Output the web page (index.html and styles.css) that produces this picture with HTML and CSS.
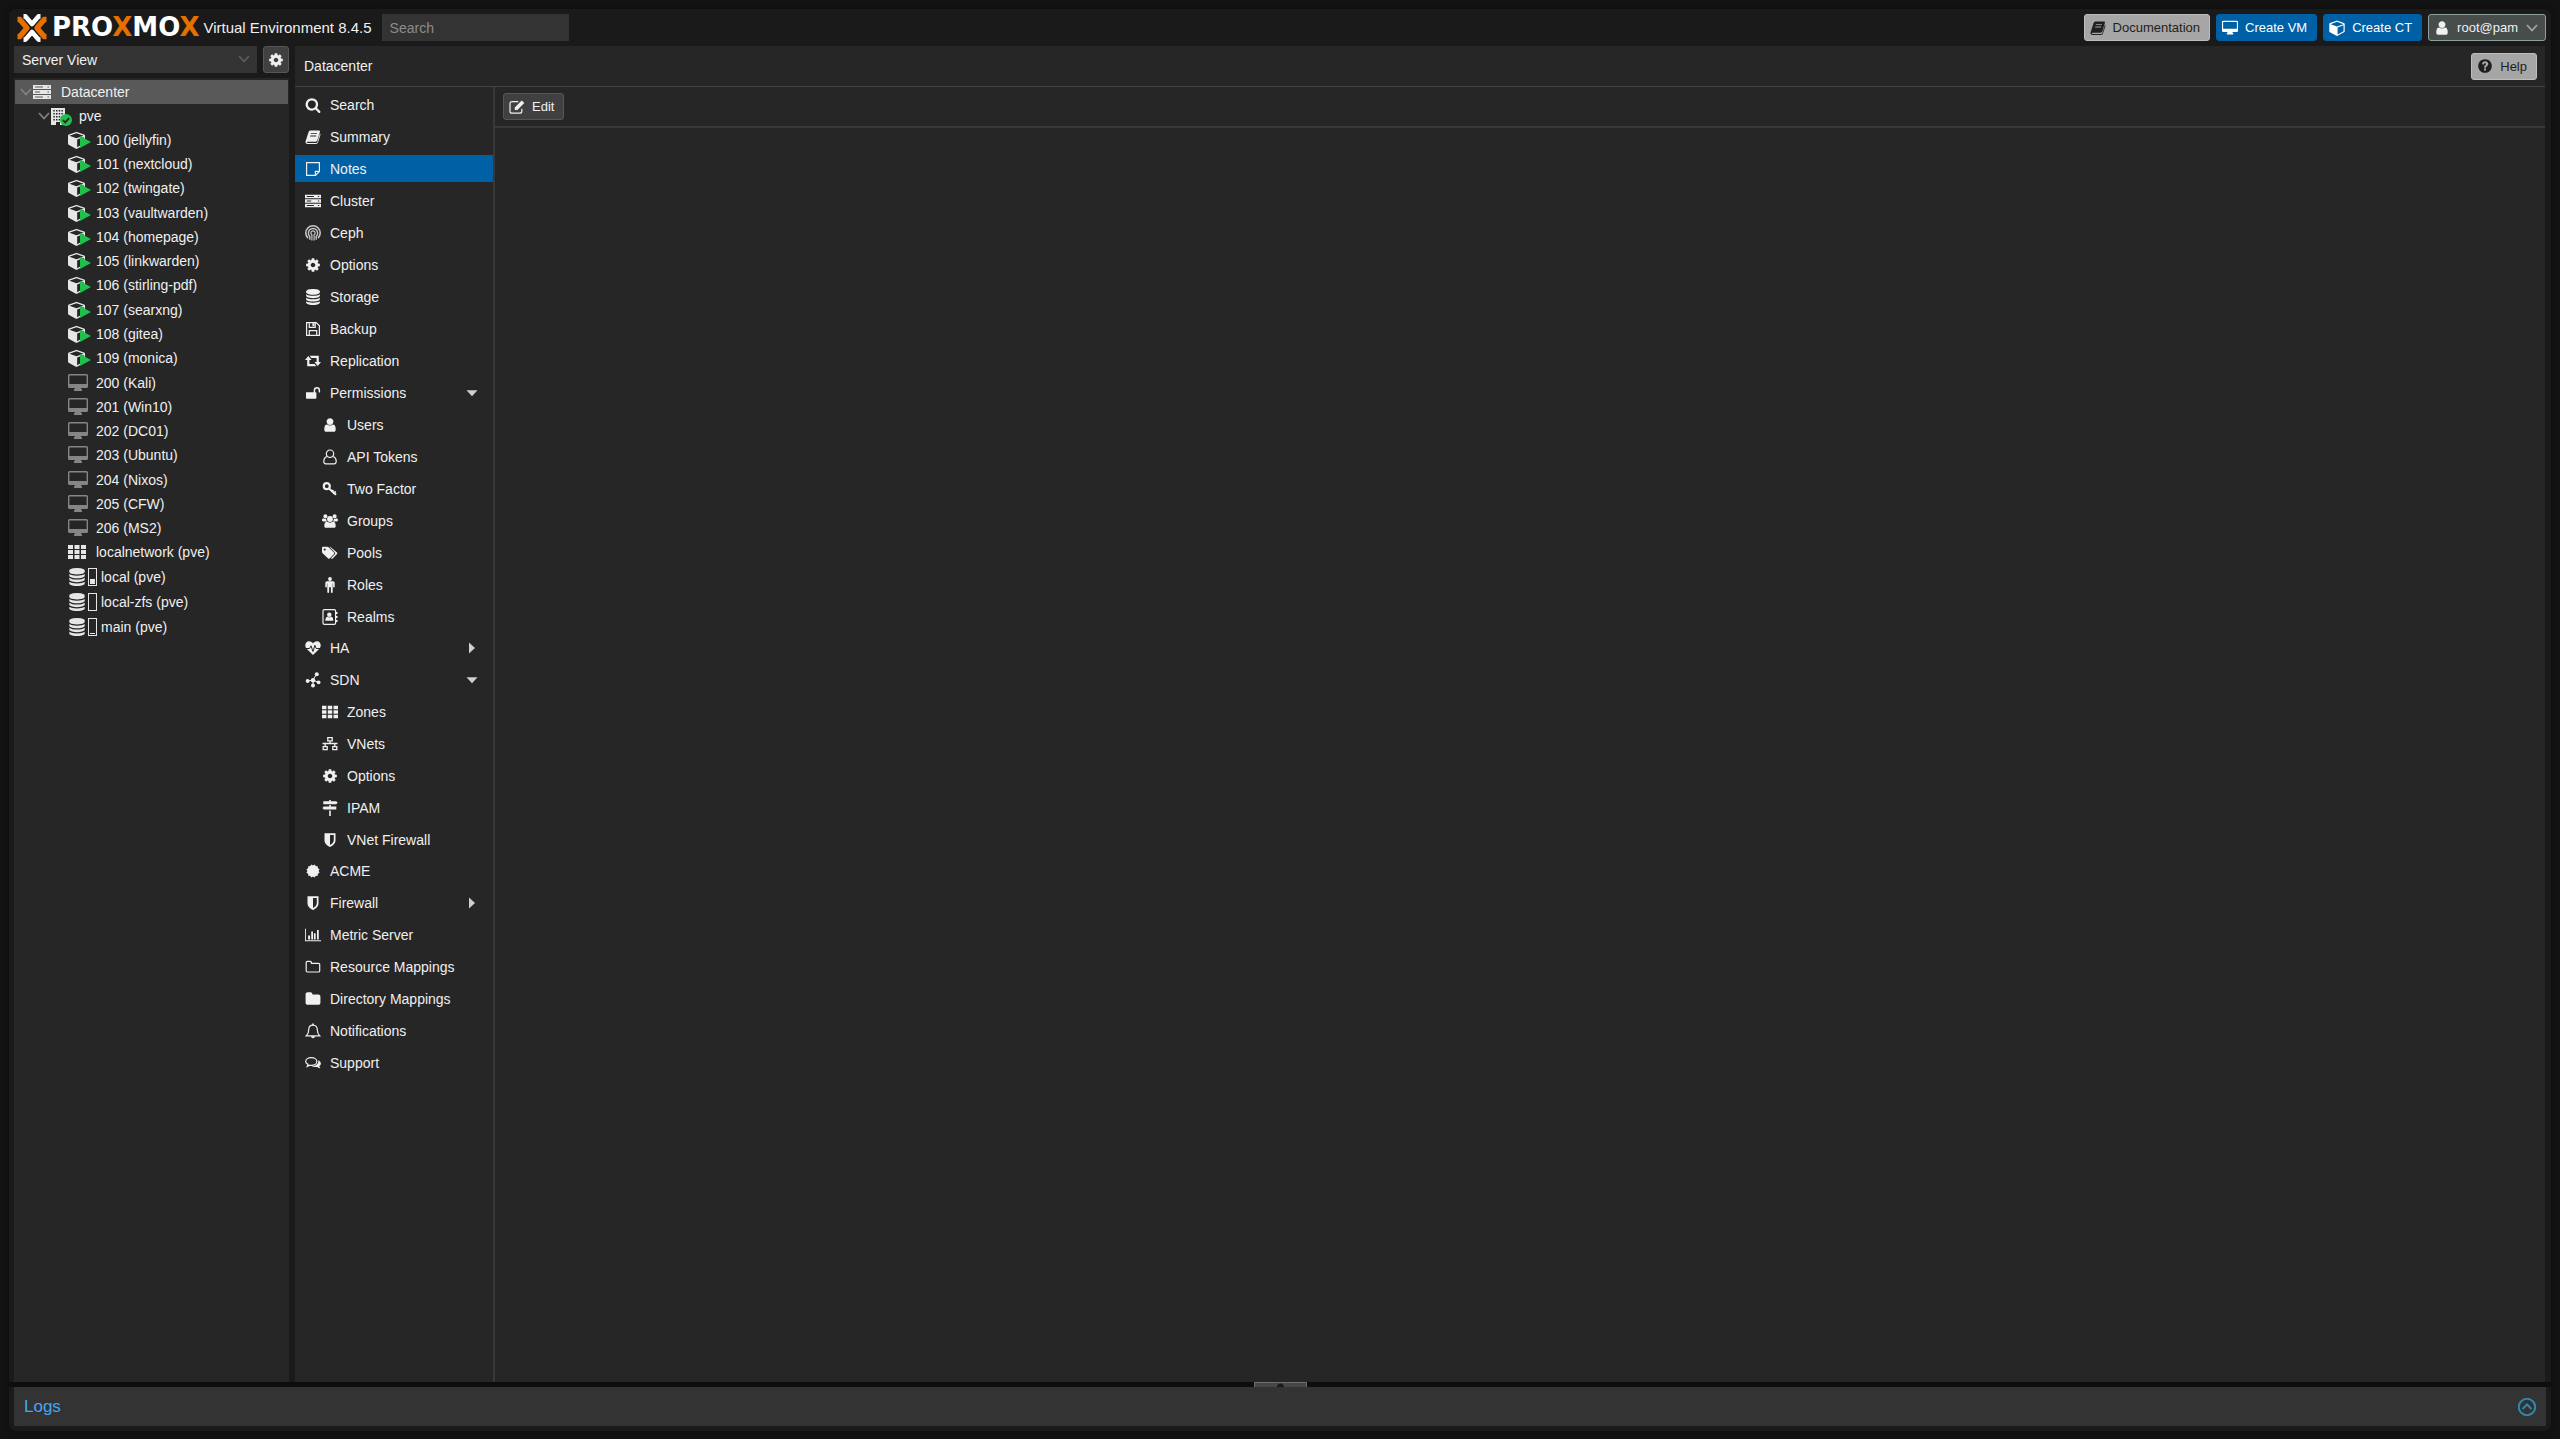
FILE: index.html
```html
<!DOCTYPE html>
<html lang="en">
<head>
  <meta charset="UTF-8">
  <title>pve - Proxmox Virtual Environment</title>
  <link rel="stylesheet" href="styles.css">
</head>
<body>
  <!-- icon sprite -->
  <svg class="sprite" aria-hidden="true">
    <symbol id="i-search" viewBox="0 0 1792 1792"><path d="M1216 832q0-185-131.5-316.5t-316.5-131.5-316.5 131.5-131.5 316.5 131.5 316.5 316.5 131.5 316.5-131.5 131.5-316.5zm512 832q0 52-38 90t-90 38q-54 0-90-38l-343-342q-179 124-399 124-143 0-273.5-55.5t-225-150-150-225-55.5-273.5 55.5-273.5 150-225 225-150 273.5-55.5 273.5 55.5 225 150 150 225 55.5 273.5q0 220-124 399l343 343q37 37 37 90z"/></symbol>
    <symbol id="i-user" viewBox="0 0 1792 1792"><path d="M1536 1399q0 109-62.500 187t-150.500 78h-854q-88 0-150.500-78t-62.500-187q0-85 8.500-160.500t31.500-152 58.500-131 94-89 134.500-34.500q131 128 313 128t313-128q76 0 134.500 34.500t94 89 58.500 131 31.500 152 8.500 160.500zm-256-887q0 159-112.500 271.500t-271.500 112.500-271.500-112.500-112.500-271.500 112.500-271.500 271.500-112.500 271.500 112.500 112.500 271.500z"/></symbol>
    <symbol id="i-cog" viewBox="0 0 1792 1792"><path d="M1152 896q0-106-75-181t-181-75-181 75-75 181 75 181 181 75 181-75 75-181zm512-109v222q0 12-8 23t-20 13l-185 28q-19 54-39 91 35 50 107 138 10 12 10 25t-9 23q-27 37-99 108t-94 71q-12 0-26-9l-138-108q-44 23-91 38-16 136-29 186-7 28-36 28h-222q-14 0-24.500-8.500t-11.500-21.500l-28-184q-49-16-90-37l-141 107q-10 9-25 9-14 0-25-11-126-114-165-168-7-10-7-23 0-12 8-23 15-21 51-66.500t54-70.500q-27-50-41-99l-183-27q-13-2-21-12.500t-8-23.500v-222q0-12 8-23t19-13l186-28q14-46 39-92-40-57-107-138-10-12-10-24 0-10 9-23 26-36 98.500-107.500t94.500-71.500q13 0 26 10l138 107q44-23 91-38 16-136 29-186 7-28 36-28h222q14 0 24.500 8.500t11.500 21.500l28 184q49 16 90 37l142-107q9-9 24-9 13 0 25 10 129 119 165 170 7 8 7 22 0 12-8 23-15 21-51 66.500t-54 70.500q26 50 41 98l183 28q13 2 21 12.500t8 23.500z"/></symbol>
    <symbol id="i-database" viewBox="0 0 1792 1792"><path d="M896 768q237 0 443-43t325-127v170q0 69-103 128t-280 93.500-385 34.500-385-34.500-280-93.500-103-128v-170q119 84 325 127t443 43zm0 768q237 0 443-43t325-127v170q0 69-103 128t-280 93.500-385 34.500-385-34.500-280-93.500-103-128v-170q119 84 325 127t443 43zm0-384q237 0 443-43t325-127v170q0 69-103 128t-280 93.500-385 34.500-385-34.500-280-93.500-103-128v-170q119 84 325 127t443 43zm0-1152q208 0 385 34.500t280 93.500 103 128v128q0 69-103 128t-280 93.500-385 34.500-385-34.500-280-93.500-103-128v-128q0-69 103-128t280-93.500 385-34.500z"/></symbol>
    <symbol id="i-folder" viewBox="0 0 1792 1792"><path d="M1728 608v704q0 92-66 158t-158 66h-1216q-92 0-158-66t-66-158v-960q0-92 66-158t158-66h320q92 0 158 66t66 158v32h672q92 0 158 66t66 158z"/></symbol>
    <symbol id="i-folder-o" viewBox="0 0 16 16"><path d="M1.200 11.800V3.600A1.200 1.200 0 0 1 2.400 2.400h2.800a1.200 1.200 0 0 1 1.200 1.200v.8h7.100a1.200 1.200 0 0 1 1.200 1.200v6.200a1.200 1.200 0 0 1-1.200 1.200H2.400a1.200 1.200 0 0 1-1.200-1.200z" fill="none" stroke="currentColor" stroke-width="1.200"/></symbol>
    <symbol id="i-cube" viewBox="0 64 1664 1728"><path d="M896 1629l640-349v-636l-640 233v752zm-64-865l698-254-698-254-698 254zm832-252v768q0 35-18 65t-49 47l-704 384q-28 16-61 16t-61-16l-704-384q-31-17-49-47t-18-65v-768q0-40 23-73t61-47l704-256q22-8 44-8t44 8l704 256q38 14 61 47t23 73z"/></symbol>
    <symbol id="i-book" viewBox="0 0 16 16"><path fill-rule="evenodd" d="M5.600 1.500h8.200c.9 0 1.400.7 1.100 1.500l-2.600 8.600c-.2.700-.9 1.200-1.700 1.200H2.500c-.6 0-.8.5-.4.900.2.200.5.200.8.200h8.300c.6 0 1-.3 1.200-.9l2.500-8.300c.6.300.7.800.5 1.400L13 13.600c-.3.800-1 1.400-1.900 1.400H2.600C1 15 .1 13.600.6 12.300L3.600 3c.3-.9 1-1.500 2-1.500zM6 4.200l-.3.900h6.100l.3-.9zm-.7 2.300-.3.900h6.100l.3-.9z"/></symbol>
    <symbol id="i-note" viewBox="0 0 16 16"><path d="M1.600 1.600h12.800v8.900l-3.900 3.900H1.600zM14.400 10.300h-4v4" fill="none" stroke="currentColor" stroke-width="1.200"/></symbol>
    <symbol id="i-server" viewBox="0 0 18 16"><path fill-rule="evenodd" d="M0 1h18v4H0zM0 6h18v4H0zM0 11h18v4H0zM2 2.400v1.200h8V2.400zM2 7.400v1.200h5V7.400zM2 12.400v1.200h8v-1.200zM14.500 2.400v1.200h1.500V2.400zM14.500 7.400v1.200h1.500V7.400zM14.500 12.400v1.200h1.500v-1.200z"/></symbol>
    <symbol id="i-ceph" viewBox="0 0 16 16"><g fill="none" stroke="currentColor" opacity=".8"><path d="M3 13.200a7.200 7.200 0 1 1 10 0" stroke-width="1.600"/><path d="M4.800 14.800v-3.400a4.600 4.600 0 1 1 6.400 0v3.400" stroke-width="1.400"/><path d="M6.900 15.600V9.800a2.100 2.100 0 1 1 2.200 0v5.800" stroke-width="1.200"/></g></symbol>
    <symbol id="i-save" viewBox="0 0 16 16"><path d="M1.600 1.600h9.600l3.200 3.200v9.600H1.600zM4.300 14.400V9.600h7.400v4.800M4.300 1.600v4.700h5.900V1.600" fill="none" stroke="currentColor" stroke-width="1.200"/><path d="M7.400 2.200h2v3h-2z"/></symbol>
    <symbol id="i-retweet" viewBox="0 0 16 16"><path d="M0 7l3.300-4 3.300 4H4.400v4h5.200l1.800 2.200H2.200V7zM16 9l-3.300 4-3.300-4h2.200V5H6.400L4.600 2.800h9.200V9z"/></symbol>
    <symbol id="i-unlock" viewBox="0 0 16 16"><path d="M1 7.300h7.700V5.200a3.200 3.200 0 0 1 6.400 0V7a.8.8 0 0 1-1.500 0V5.200a1.700 1.700 0 0 0-3.400 0v2.100h.4a.8.800 0 0 1 .8.800v4.900a.8.800 0 0 1-.8.800H1.800a.8.800 0 0 1-.8-.8z"/></symbol>
    <symbol id="i-user-o" viewBox="0 0 16 16"><g fill="none" stroke="currentColor" stroke-width="1.200"><circle cx="8" cy="4.700" r="3.700"/><path d="M4.800 7.600C2.700 8.200 1.800 10 1.800 12.600c0 1.300.9 2.200 2 2.200h8.400c1.100 0 2-.9 2-2.200 0-2.600-.9-4.400-3-5"/></g></symbol>
    <symbol id="i-key" viewBox="0 0 16 16"><g fill="none" stroke="currentColor"><circle cx="4.800" cy="5.200" r="3" stroke-width="2.200"/><path d="M7 7.400l7 6.400" stroke-width="2"/><path d="M11.400 12.800l2.300-2.400M9.600 11l1.800-1.900" stroke-width="1.600"/></g></symbol>
    <symbol id="i-users" viewBox="0 0 18 16"><circle cx="3.800" cy="2.700" r="2.200"/><circle cx="14.200" cy="2.700" r="2.200"/><path d="M0 7.200c0-1.400.7-2.400 1.700-2.400 1.300.9 2 .9 3.100.5C4.600 7 5 7.700 5.600 8.500H1.500C.6 8.500 0 8 0 7.200zM18 7.200c0-1.400-.7-2.400-1.700-2.400-1.300.9-2 .9-3.100.5.200 1.700-.2 2.400-.8 3.200h4.100c.9 0 1.500-.5 1.500-1.300z"/><circle cx="9" cy="5.700" r="3.300"/><path d="M5.500 8.600c2.200 1.700 4.800 1.700 7 0 2.200.4 2.900 2.500 2.900 4.900 0 1.400-.8 2.200-2 2.200H4.600c-1.200 0-2-.8-2-2.200 0-2.400.7-4.500 2.900-4.900z"/></symbol>
    <symbol id="i-tags" viewBox="0 0 18 16"><path fill-rule="evenodd" d="M0 2.500C0 1.700.6 1.100 1.400 1.100h4.500c.7 0 1.600.4 2.100.9l5.500 5.500c.5.500.5 1.200 0 1.700l-4.900 4.900c-.5.500-1.200.5-1.700 0L1 8.600C.4 8 0 7.200 0 6.500zM3 2.800a1.200 1.200 0 1 0 .01 0z"/><path d="M8.300 1.100c.8 0 1.700.4 2.200.9L16.900 7.500c.5.500.5 1.200 0 1.700L12 14.100c-.6.600-1.300.5-1.900-.2l4.300-4.400c.6-.7.6-1.500 0-2.200z"/></symbol>
    <symbol id="i-male" viewBox="0 0 16 16"><circle cx="8" cy="2" r="1.900"/><path d="M5 4.300h6a1.700 1.700 0 0 1 1.700 1.700v3.800a.8.800 0 0 1-1.600 0V6.600h-.4v8.400a.9.900 0 0 1-1.800 0v-4.700h-1.800V15a.9.900 0 0 1-1.800 0V6.600h-.4v3.200a.8.800 0 0 1-1.600 0V6A1.700 1.700 0 0 1 5 4.300z"/></symbol>
    <symbol id="i-address" viewBox="0 0 16 16"><rect x="1" y=".6" width="12.600" height="14.800" rx="1.400" fill="none" stroke="currentColor" stroke-width="1.200"/><path d="M14 3h1.500v2H14zM14 7h1.500v2H14zM14 11h1.500v2H14z"/><circle cx="7.300" cy="5.700" r="2.200"/><path d="M3.300 11.700c0-2.300.7-4 2.300-4 1.200.9 2.300.9 3.500 0 1.600 0 2.200 1.700 2.200 4z"/></symbol>
    <symbol id="i-heartbeat" viewBox="0 0 16 16"><path d="M8 15L1.600 8.800C-1 5.800.5 1.300 4 1.300c1.900 0 3.100 1.100 4 2.100.9-1 2.100-2.100 4-2.100 3.500 0 5 4.500 2.400 7.500z"/><path class="cut" d="M0 8.500h4.600L6 5.800l2 5.700 1.900-6.200 1.300 3.200H16"/></symbol>
    <symbol id="i-sdn" viewBox="0 0 16 16"><path d="M3 9l5-1 3.500-6M8 8.300V13M8 8.300l5.500 2" fill="none" stroke="currentColor" stroke-width="1"/><circle cx="2.600" cy="9" r="1.900"/><circle cx="8" cy="8.300" r="2.200"/><circle cx="11.800" cy="2.200" r="2"/><circle cx="8" cy="13.400" r="2"/><circle cx="13.600" cy="10.300" r="1.900"/></symbol>
    <symbol id="i-th" viewBox="0 0 18 16"><path d="M0 1h5v4H0zM6.500 1h5v4h-5zM13 1h5v4h-5zM0 6h5v4H0zM6.500 6h5v4h-5zM13 6h5v4h-5zM0 11h5v4H0zM6.500 11h5v4h-5zM13 11h5v4h-5z"/></symbol>
    <symbol id="i-sitemap" viewBox="0 0 16 16"><path d="M5.800 1.600h4.400v3.300H5.800zM1.200 10.600h4v3h-4zM10.800 10.600h4v3h-4zM8 5v2.500M.5 7.500h15M3.200 7.500v3M12.800 7.500v3" fill="none" stroke="currentColor" stroke-width="1.300"/></symbol>
    <symbol id="i-signs" viewBox="0 0 16 16"><path d="M7.200 0h1.600v1.200h5.400l1.500 1.500-1.500 1.600H1.300V1.200h5.900zM7.200 5h1.600v1.500h5.500v3H1.800L.4 8l1.400-1.500h5.400zM7.200 10.500h1.600V16H7.200z"/></symbol>
    <symbol id="i-shield" viewBox="0 0 16 16"><path fill-rule="evenodd" d="M2.500 1.200h11v7c0 3.300-2.600 5.400-5.500 6.800-2.900-1.400-5.500-3.500-5.500-6.800zM8 2.900v10.200c2.200-1.300 3.800-2.700 3.800-5V2.900z"/></symbol>
    <symbol id="i-certificate" viewBox="0 0 16 16"><path d="M3.200 3.200h9.600v9.600H3.200z"/><path d="M3.200 3.200h9.600v9.600H3.200z" transform="rotate(30 8 8)"/><path d="M3.200 3.200h9.600v9.600H3.200z" transform="rotate(60 8 8)"/></symbol>
    <symbol id="i-chart" viewBox="0 0 18 16"><path d="M0 1h1v13h17v1H0zM3.500 8.500h2.200V13H3.500zM7 4h2v9H7zM10 6h2v7h-2zM13.500 2.500h2V13h-2z"/></symbol>
    <symbol id="i-bell" viewBox="0 0 16 16"><path d="M1.400 12.800C3 11.400 3.700 9.800 3.700 6.800c0-2.600 1.600-4.700 4.300-4.700s4.300 2.100 4.300 4.700c0 3 .7 4.600 2.300 6z" fill="none" stroke="currentColor" stroke-width="1.200"/><path d="M7.200.6h1.600v1.800H7.200zM6 13.300h4a2 2 0 0 1-4 0z"/></symbol>
    <symbol id="i-comments" viewBox="0 0 16 16"><path d="M6.200 2.600c3.200 0 5.600 1.700 5.600 3.900s-2.400 3.900-5.600 3.900c-.6 0-1.100 0-1.600-.2l-2.400 1.200.8-2C1.500 8.700.7 7.700.7 6.500c0-2.200 2.400-3.900 5.500-3.900z" fill="none" stroke="currentColor" stroke-width="1.200"/><path d="M13.200 5.200c1.600.7 2.700 1.900 2.700 3.300 0 1.100-.7 2-1.700 2.700.2.900.7 1.400 1.200 1.900-1.200.2-2.300-.2-3.400-1.100-2 .3-4-.1-5.200-1 3.600.1 7.200-2.200 6.400-5.800z"/></symbol>
    <symbol id="i-desktop" viewBox="0 0 20 18"><path fill-rule="evenodd" d="M1.500 0h17A1.500 1.500 0 0 1 20 1.500v11a1.500 1.500 0 0 1-1.500 1.500h-5.300v1.300H14V17H6v-1.700h.8V14H1.500A1.500 1.500 0 0 1 0 12.500v-11A1.500 1.500 0 0 1 1.500 0zM1.400 1.400V10h17.200V1.400z"/></symbol>
    <symbol id="i-building" viewBox="0 0 14 17"><path fill-rule="evenodd" d="M0 0h14v17H9v-3H5v3H0zM2.300 2v1.600h1.500V2zm2.700 0v1.600h1.500V2zm2.700 0v1.600h1.500V2zm2.700 0v1.600h1.500V2zM2.300 5v1.600h1.500V5zM5 5v1.600h1.500V5zm2.700 0v1.600h1.500V5zm2.700 0v1.600h1.500V5zM2.300 8v1.600h1.500V8zM5 8v1.600h1.500V8zm2.700 0v1.600h1.500V8zm2.700 0v1.600h1.500V8zM2.300 11v1.600h1.500V11zM5 11v1.600h1.500V11zm2.700 0v1.600h1.500V11z"/></symbol>
    <symbol id="i-check" viewBox="0 0 12 12"><circle cx="6" cy="6" r="6" fill="#21bf4b"/><path d="M3 6.200l2.200 2.200L9.200 4.200" fill="none" stroke="#262626" stroke-width="1.800"/></symbol>
    <symbol id="i-play" viewBox="0 0 11 12"><path d="M0 0l11 6L0 12z" fill="#21bf4b"/></symbol>
    <symbol id="i-edit" viewBox="0 0 16 16"><path d="M9.300 2.600H3A2 2 0 0 0 1 4.600v7.600a2 2 0 0 0 2 2h7.800a2 2 0 0 0 2-2V9.800" fill="none" stroke="currentColor" stroke-width="1.200"/><path d="M5.800 8.400L12.700 1.500l2.600 2.600L8.400 11H5.800z"/></symbol>
    <symbol id="i-help" viewBox="0 0 16 16"><path fill-rule="evenodd" d="M8 1.200a6.800 6.800 0 1 0 .01 0zM7 10.600h2v2H7zM5 6.300C5.100 4.200 6.500 3.300 8.100 3.300c1.700 0 3.200 1 3.200 2.700 0 1.900-2.300 2-2.300 3.700H7c0-2.400 2-2.500 2-3.600 0-.6-.5-.9-1-.9-.7 0-1 .5-1.100 1.300z"/></symbol>
    <symbol id="i-chevron" viewBox="0 0 14 14"><path d="M2 4l5 5.500L12 4" fill="none" stroke="currentColor" stroke-width="1.800"/></symbol>
    <symbol id="i-down" viewBox="0 0 16 16"><path d="M2.500 5.200h11L8 11.200z"/></symbol>
    <symbol id="i-right" viewBox="0 0 16 16"><path d="M5 2.500l6 5.500-6 5.500z"/></symbol>
  </svg>

  <div class="viewport">
    <header class="header">
      <div class="logo">
        <svg class="logo-mark" viewBox="0 0 32 28">
          <g fill="none" stroke-width="5.400" stroke-linejoin="round">
            <path d="M1.500 5.500h2.300l7.200 8.500-7.200 8.500H1.500M30.500 5.500h-2.300L21 14l7.200 8.500h2.300" stroke="#e57000"/>
            <path d="M7.500 2.400h2L16 10l6.500-7.600h2M7.500 25.600h2L16 18l6.500 7.600h2" stroke="#fff" stroke-width="4.600"/>
          </g>
        </svg>
        <span class="logo-text">PRO<i>X</i>MO<i>X</i></span>
      </div>
      <span class="version">Virtual Environment 8.4.5</span>
      <input class="search" type="text" placeholder="Search" aria-label="Search">
      <div class="actions">
        <button class="btn btn-light"><svg class="icon"><use href="#i-book"/></svg>Documentation</button>
        <button class="btn btn-blue"><svg class="icon"><use href="#i-desktop"/></svg>Create VM</button>
        <button class="btn btn-blue"><svg class="icon"><use href="#i-cube"/></svg>Create CT</button>
        <button class="btn btn-user"><svg class="icon"><use href="#i-user"/></svg>root@pam<svg class="chevron"><use href="#i-chevron"/></svg></button>
      </div>
    </header>

    <div class="workspace">
      <aside class="side">
        <div class="side-bar">
          <div class="combo">
            <select class="view" aria-label="View">
              <option>Server View</option>
              <option>Folder View</option>
              <option>Pool View</option>
              <option>Tag View</option>
            </select>
            <svg class="chevron"><use href="#i-chevron"/></svg>
          </div>
          <button class="btn btn-gear" aria-label="Settings"><svg class="icon"><use href="#i-cog"/></svg></button>
        </div>
        <div class="tree">
          <div class="node selected"><svg class="chevron"><use href="#i-chevron"/></svg><span class="slot"><svg class="server"><use href="#i-server"/></svg></span>Datacenter</div>
          <div class="node level-1"><svg class="chevron"><use href="#i-chevron"/></svg><span class="slot"><svg class="building"><use href="#i-building"/></svg><svg class="check"><use href="#i-check"/></svg></span>pve</div>
          <ul>
            <li class="node level-2"><span class="slot"><svg class="cube"><use href="#i-cube"/></svg><svg class="play"><use href="#i-play"/></svg></span>100 (jellyfin)</li>
            <li class="node level-2"><span class="slot"><svg class="cube"><use href="#i-cube"/></svg><svg class="play"><use href="#i-play"/></svg></span>101 (nextcloud)</li>
            <li class="node level-2"><span class="slot"><svg class="cube"><use href="#i-cube"/></svg><svg class="play"><use href="#i-play"/></svg></span>102 (twingate)</li>
          </ul>
          <ul class="group">
            <li class="node level-2"><span class="slot"><svg class="cube"><use href="#i-cube"/></svg><svg class="play"><use href="#i-play"/></svg></span>103 (vaultwarden)</li>
            <li class="node level-2"><span class="slot"><svg class="cube"><use href="#i-cube"/></svg><svg class="play"><use href="#i-play"/></svg></span>104 (homepage)</li>
            <li class="node level-2"><span class="slot"><svg class="cube"><use href="#i-cube"/></svg><svg class="play"><use href="#i-play"/></svg></span>105 (linkwarden)</li>
            <li class="node level-2"><span class="slot"><svg class="cube"><use href="#i-cube"/></svg><svg class="play"><use href="#i-play"/></svg></span>106 (stirling-pdf)</li>
          </ul>
          <ul class="group">
            <li class="node level-2"><span class="slot"><svg class="cube"><use href="#i-cube"/></svg><svg class="play"><use href="#i-play"/></svg></span>107 (searxng)</li>
            <li class="node level-2"><span class="slot"><svg class="cube"><use href="#i-cube"/></svg><svg class="play"><use href="#i-play"/></svg></span>108 (gitea)</li>
            <li class="node level-2"><span class="slot"><svg class="cube"><use href="#i-cube"/></svg><svg class="play"><use href="#i-play"/></svg></span>109 (monica)</li>
          </ul>
          <ul class="group">
            <li class="node level-2"><span class="slot"><svg class="vm"><use href="#i-desktop"/></svg></span>200 (Kali)</li>
            <li class="node level-2"><span class="slot"><svg class="vm"><use href="#i-desktop"/></svg></span>201 (Win10)</li>
            <li class="node level-2"><span class="slot"><svg class="vm"><use href="#i-desktop"/></svg></span>202 (DC01)</li>
            <li class="node level-2"><span class="slot"><svg class="vm"><use href="#i-desktop"/></svg></span>203 (Ubuntu)</li>
          </ul>
          <ul class="group">
            <li class="node level-2"><span class="slot"><svg class="vm"><use href="#i-desktop"/></svg></span>204 (Nixos)</li>
            <li class="node level-2"><span class="slot"><svg class="vm"><use href="#i-desktop"/></svg></span>205 (CFW)</li>
            <li class="node level-2"><span class="slot"><svg class="vm"><use href="#i-desktop"/></svg></span>206 (MS2)</li>
            <li class="node level-2"><span class="slot"><svg class="server"><use href="#i-th"/></svg></span>localnetwork (pve)</li>
            <li class="node level-2 storage"><span class="slot"><svg class="disk"><use href="#i-database"/></svg></span><span class="usage"><span style="height: 35%"></span></span>local (pve)</li>
            <li class="node level-2 storage"><span class="slot"><svg class="disk"><use href="#i-database"/></svg></span><span class="usage"><span style="height: 0%"></span></span>local-zfs (pve)</li>
            <li class="node level-2 storage"><span class="slot"><svg class="disk"><use href="#i-database"/></svg></span><span class="usage"><span style="height: 5%"></span></span>main (pve)</li>
          </ul>
        </div>
      </aside>

      <main class="panel">
        <div class="panel-title">
          <span>Datacenter</span>
          <button class="btn btn-light"><svg class="icon"><use href="#i-help"/></svg>Help</button>
        </div>
        <div class="panel-body">
          <nav class="nav">
            <a href="#"><svg class="icon"><use href="#i-search"/></svg>Search</a>
            <a href="#"><svg class="icon"><use href="#i-book"/></svg>Summary</a>
            <a href="#" class="active"><svg class="icon"><use href="#i-note"/></svg>Notes</a>
            <a href="#"><svg class="icon"><use href="#i-server"/></svg>Cluster</a>
            <a href="#"><svg class="icon"><use href="#i-ceph"/></svg>Ceph</a>
            <a href="#"><svg class="icon"><use href="#i-cog"/></svg>Options</a>
            <a href="#"><svg class="icon"><use href="#i-database"/></svg>Storage</a>
            <a href="#"><svg class="icon"><use href="#i-save"/></svg>Backup</a>
            <a href="#"><svg class="icon"><use href="#i-retweet"/></svg>Replication</a>
            <a href="#"><svg class="icon"><use href="#i-unlock"/></svg>Permissions<svg class="caret"><use href="#i-down"/></svg></a>
            <div class="subnav">
              <a href="#"><svg class="icon"><use href="#i-user"/></svg>Users</a>
              <a href="#"><svg class="icon"><use href="#i-user-o"/></svg>API Tokens</a>
              <a href="#"><svg class="icon"><use href="#i-key"/></svg>Two Factor</a>
              <a href="#"><svg class="icon"><use href="#i-users"/></svg>Groups</a>
              <a href="#"><svg class="icon"><use href="#i-tags"/></svg>Pools</a>
              <a href="#"><svg class="icon"><use href="#i-male"/></svg>Roles</a>
              <a href="#"><svg class="icon"><use href="#i-address"/></svg>Realms</a>
            </div>
            <a href="#"><svg class="icon"><use href="#i-heartbeat"/></svg>HA<svg class="caret"><use href="#i-right"/></svg></a>
            <a href="#"><svg class="icon"><use href="#i-sdn"/></svg>SDN<svg class="caret"><use href="#i-down"/></svg></a>
            <div class="subnav">
              <a href="#"><svg class="icon"><use href="#i-th"/></svg>Zones</a>
              <a href="#"><svg class="icon"><use href="#i-sitemap"/></svg>VNets</a>
              <a href="#"><svg class="icon"><use href="#i-cog"/></svg>Options</a>
              <a href="#"><svg class="icon"><use href="#i-signs"/></svg>IPAM</a>
              <a href="#"><svg class="icon"><use href="#i-shield"/></svg>VNet Firewall</a>
            </div>
            <a href="#"><svg class="icon"><use href="#i-certificate"/></svg>ACME</a>
            <a href="#"><svg class="icon"><use href="#i-shield"/></svg>Firewall<svg class="caret"><use href="#i-right"/></svg></a>
            <a href="#"><svg class="icon"><use href="#i-chart"/></svg>Metric Server</a>
            <a href="#"><svg class="icon"><use href="#i-folder-o"/></svg>Resource Mappings</a>
            <a href="#"><svg class="icon"><use href="#i-folder"/></svg>Directory Mappings</a>
            <a href="#"><svg class="icon"><use href="#i-bell"/></svg>Notifications</a>
            <a href="#"><svg class="icon"><use href="#i-comments"/></svg>Support</a>
          </nav>
          <section class="content">
            <div class="toolbar">
              <button class="btn btn-dark"><svg class="icon"><use href="#i-edit"/></svg>Edit</button>
            </div>
          </section>
        </div>
      </main>
    </div>

    <div class="splitter"><div class="handle"></div></div>
    <footer class="logs">
      <span>Logs</span>
      <button class="expand" aria-label="Expand logs">
        <svg viewBox="0 0 18 18"><circle cx="9" cy="9" r="8.200"/><path d="M4.500 11L9 6.500l4.500 4.500"/></svg>
      </button>
    </footer>
  </div>
</body>
</html>
```

FILE: styles.css
```css
* {
  box-sizing: border-box;
}
body {
  margin: 0;
  height: 100vh;
  padding: 9px 9px 8px;
  background: #141414;
  color: #f0f0f0;
  font-family: "Liberation Sans", Arial, sans-serif;
  font-size: 14px;
}
svg {
  fill: currentColor;
  flex: none;
}
ul {
  list-style: none;
  margin: 0;
  padding: 0;
}
button, input, select {
  font-family: inherit;
}
.sprite {
  position: absolute;
  width: 0;
  height: 0;
}
.viewport {
  display: flex;
  flex-direction: column;
  height: 100%;
  padding: 5px;
  background: #1a1a1a;
  border-radius: 7px;
  box-shadow: 0 0 12px #0b0b0b;
}

/* header */
.header {
  display: flex;
  align-items: center;
  height: 27px;
  margin-bottom: 5px;
}
.logo {
  display: flex;
  align-items: center;
  gap: 4px;
  padding-left: 2px;
  margin-right: 4px;
}
.logo-mark {
  width: 32px;
  height: 28px;
}
.logo-text {
  color: #fff;
  font-family: "DejaVu Sans", sans-serif;
  font-size: 26px;
  font-weight: bold;
  line-height: 27px;
}
.logo-text i {
  font-style: normal;
  color: #e57000;
}
.version {
  font-size: 15px;
  margin-right: 10px;
}
.search {
  width: 187px;
  height: 27px;
  padding: 0 8px;
  border: 0;
  background: #333;
  color: #f0f0f0;
  font-size: 14px;
}
.search::placeholder {
  color: #8c8c8c;
}
.actions {
  display: flex;
  gap: 6px;
  margin-left: auto;
}

/* buttons */
.btn {
  display: flex;
  align-items: center;
  gap: 7px;
  height: 27px;
  padding: 0 9px 0 5px;
  border: 1px solid;
  border-radius: 3px;
  font-size: 13px;
}
.btn .icon {
  width: 16px;
  height: 16px;
}
.btn-light {
  background: #a6a6a6;
  border-color: #bdbdbd;
  color: #1f1f1f;
}
.btn-blue {
  background: #0060a5;
  border-color: #0060a5;
  color: #fff;
}
.btn-dark, .btn-gear {
  background: #404040;
  border-color: #565656;
  color: #f0f0f0;
}
.btn-gear {
  padding: 0 4px;
}
.btn-user {
  background: #464d4b;
  border-color: #8ea09b;
  color: #f0f0f0;
  padding-right: 6px;
}
.chevron {
  width: 14px;
  height: 14px;
  color: #808080;
}
.btn-user .chevron {
  color: #a0a8a6;
}

/* left side */
.workspace {
  display: grid;
  grid-template-columns: 275px minmax(0, 1fr);
  gap: 6px;
  flex: 1;
  min-height: 0;
  margin-right: 1px;
}
.side {
  display: flex;
  flex-direction: column;
  gap: 5px;
}
.side-bar {
  display: flex;
  gap: 6px;
}
.combo {
  position: relative;
  flex: 1;
}
.combo .chevron {
  position: absolute;
  top: 6px;
  right: 6px;
  color: #5c5c5c;
  pointer-events: none;
}
.view {
  appearance: none;
  width: 100%;
  height: 27px;
  padding: 0 8px;
  border: 0;
  border-radius: 0;
  background: #333;
  color: #f0f0f0;
  font-size: 14px;
}
.tree {
  flex: 1;
  padding: 2px 1px;
  background: #262626;
}
.node {
  display: flex;
  align-items: center;
  height: 24px;
  padding-left: 4px;
}
.node.selected {
  background: #595959;
}
.level-1 {
  padding-left: 22px;
}
.level-2 {
  padding-left: 53px;
}
.group {
  margin-top: 1px;
}
.storage {
  height: 25px;
}
.slot {
  position: relative;
  display: flex;
  width: 20px;
  margin-right: 8px;
  color: #e6e6e6;
}
.server {
  width: 18px;
  height: 16px;
}
.building {
  width: 14px;
  height: 17px;
}
.check {
  position: absolute;
  left: 9px;
  top: 6px;
  width: 12px;
  height: 12px;
}
.cube {
  width: 17px;
  height: 18px;
}
.play {
  position: absolute;
  left: 12px;
  top: 5px;
  width: 11px;
  height: 12px;
}
.vm {
  width: 20px;
  height: 18px;
  color: #858585;
}
.disk {
  width: 18px;
  height: 18px;
}
.storage .slot {
  margin-right: 0;
}
.usage {
  display: flex;
  align-items: flex-end;
  width: 9px;
  height: 18px;
  margin-right: 4px;
  padding: 1px;
  border: 1px solid #e6e6e6;
}
.usage span {
  width: 100%;
  background: #e6e6e6;
}

/* main panel */
.panel {
  display: flex;
  flex-direction: column;
  background: #262626;
}
.panel-title {
  display: flex;
  align-items: center;
  justify-content: space-between;
  height: 41px;
  padding: 0 8px 0 9px;
  border-bottom: 1px solid #424242;
}
.panel-body {
  display: grid;
  grid-template-columns: 200px minmax(0, 1fr);
  flex: 1;
}
.nav {
  padding-top: 4px;
  border-right: 2px solid #383838;
}
.nav a {
  display: flex;
  align-items: center;
  gap: 9px;
  height: 27px;
  margin-bottom: 5px;
  padding: 0 13px 0 10px;
  color: #f0f0f0;
  text-decoration: none;
}
.nav .icon {
  width: 16px;
  height: 16px;
}
.nav .active {
  background: #0060a5;
}
.subnav {
  margin-bottom: -1px;
}
.nav .subnav a {
  padding-left: 27px;
}
.caret {
  width: 16px;
  height: 16px;
  margin-left: auto;
  color: #d0d0d0;
}
.cut {
  fill: none;
  stroke: #262626;
  stroke-width: 1px;
}
.toolbar {
  padding: 6px 8px;
  border-bottom: 2px solid #383838;
}

/* logs */
.splitter {
  height: 5px;
  margin: 0 -5px;
  background: #0d0d0d;
}
.handle {
  width: 53px;
  height: 5px;
  margin: 0 auto;
  border: 1px solid #6e6e6e;
  border-bottom: 0;
  background: radial-gradient(circle at 50% 100%, #1a1a1a 3px, #474747 4px);
}
.logs {
  display: flex;
  align-items: center;
  justify-content: space-between;
  height: 39px;
  padding: 0 10px;
  background: #333;
  color: #42a8f5;
  font-size: 17px;
}
.expand {
  display: flex;
  padding: 0;
  border: 0;
  background: none;
}
.expand svg {
  width: 18px;
  height: 18px;
  fill: none;
  stroke: #2e87ad;
  stroke-width: 2px;
}
```
